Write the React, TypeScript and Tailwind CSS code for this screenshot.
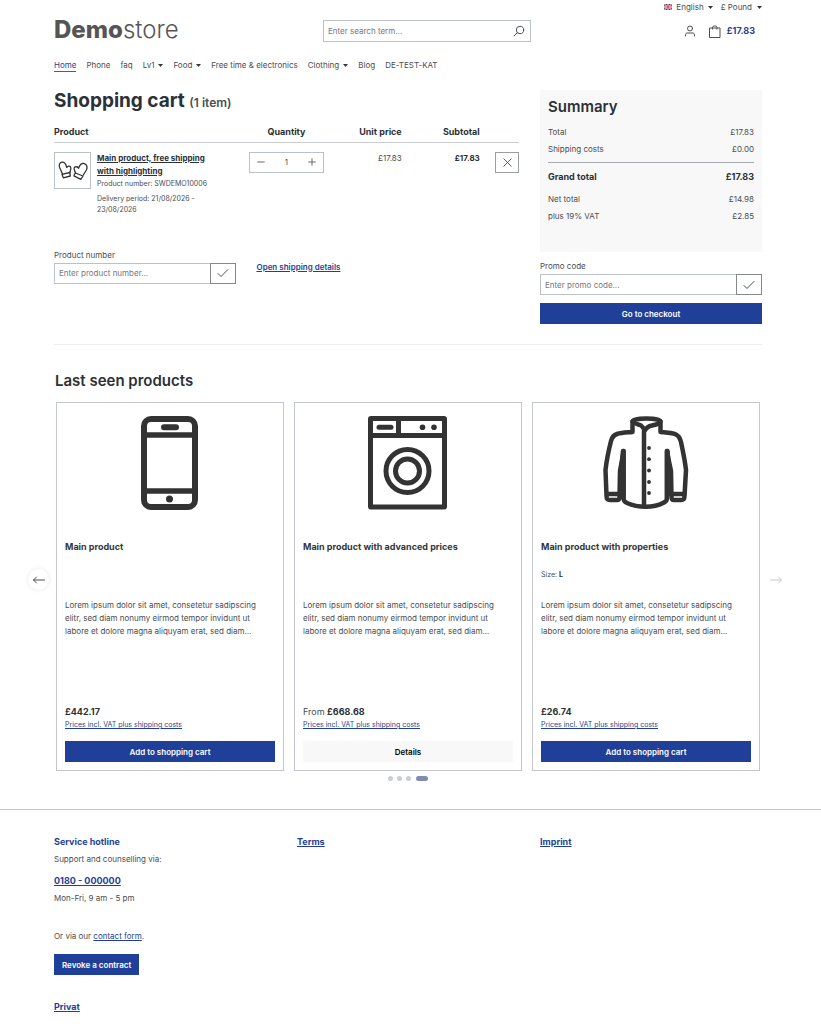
import React, { useState } from 'react';

const NAV_ITEMS = [
  { label: 'Home', active: true },
  { label: 'Phone' },
  { label: 'faq' },
  { label: 'Lv1', dropdown: true },
  { label: 'Food', dropdown: true },
  { label: 'Free time & electronics' },
  { label: 'Clothing', dropdown: true },
  { label: 'Blog' },
  { label: 'DE-TEST-KAT' },
];

const LOREM =
  'Lorem ipsum dolor sit amet, consetetur sadipscing elitr, sed diam nonumy eirmod tempor invidunt ut labore et dolore magna aliquyam erat, sed diam...';

interface Product {
  name: string;
  price: string;
  from?: boolean;
  size?: string;
  details?: boolean;
  Icon: () => React.JSX.Element;
}

const PRODUCTS: Product[] = [
  { name: 'Main product', price: '£442.17', Icon: PhoneIcon },
  { name: 'Main product with advanced prices', price: '£668.68', from: true, details: true, Icon: WasherIcon },
  { name: 'Main product with properties', price: '£26.74', size: 'L', Icon: JacketIcon },
];

function PhoneIcon() {
  return (
    <svg className="h-24 w-24" viewBox="0 0 96 96" fill="none" stroke="#333" strokeWidth="6">
      <rect x="22" y="4" width="51" height="88" rx="7" />
      <path d="M22 20h51M22 76h51" strokeWidth="5.5" />
      <path d="M42 12.3h12" strokeLinecap="round" />
      <circle cx="47.5" cy="84" r="3.5" fill="#333" stroke="none" />
    </svg>
  );
}

function WasherIcon() {
  return (
    <svg className="h-24 w-24" viewBox="0 0 96 96" fill="none" stroke="#333" strokeWidth="5">
      <rect x="10.5" y="3.5" width="74" height="88.5" rx="0.5" strokeLinejoin="round" />
      <path d="M10 20.5h75M38.5 3v17" />
      <path d="M19 12.2h12" strokeLinecap="round" />
      <circle cx="62.5" cy="12.2" r="2.8" fill="#333" stroke="none" />
      <circle cx="74" cy="12.2" r="2.8" fill="#333" stroke="none" />
      <circle cx="47.5" cy="56" r="21.5" />
      <circle cx="47.5" cy="56" r="12" />
    </svg>
  );
}

function JacketIcon() {
  return (
    <svg className="h-24 w-24" viewBox="0 0 96 96" fill="none" stroke="#333" strokeWidth="4.5" strokeLinecap="round" strokeLinejoin="round">
      <path d="M34.500 6.500C35 2.500 62 2.500 62.500 6.500V17C70 17.500 75 18 78 19.500C81 21 82 23 83 27C84.500 34 87 46 88 55L86.500 81C86.500 84.500 85 85 83 85H76C74 85 73.500 84 73.500 82L73 56L68.800 36V84C68.800 86.500 67 87 65 88C56 93 40 93 29 88C27 87 25.700 86.500 25.700 84V36L22 56L21.500 82C21.500 84 21 85 19 85H12C10 85 8.500 84.500 8.500 81L7.500 55C8.500 46 11.500 32 13 26C14 22 16 20 19 19C24 17.500 30 17.500 34.500 17Z" />
      <path d="M34.500 6.500C38 10 41 9 43 10.500C45 12 46 13.500 46.500 16C48 13 51 11 54 10.500C58 9.500 61 9.500 62.500 6.500M46 16V91" />
      <path d="M9.500 79H21M74 79h12M25 36l-1.500 19v24M69.500 36L71 55v24" />
      <g fill="#333" stroke="none">
        <circle cx="51" cy="33" r="1.900" />
        <circle cx="51" cy="44.200" r="1.900" />
        <circle cx="51" cy="55.500" r="1.900" />
        <circle cx="51" cy="67" r="1.900" />
        <circle cx="51" cy="78" r="1.900" />
      </g>
    </svg>
  );
}

function MittensIcon() {
  return (
    <svg className="h-[30px] w-[30px]" viewBox="0 0 30 30" fill="none" stroke="#333" strokeWidth="1.3" strokeLinejoin="round" strokeLinecap="round">
      <path d="M4.500 19L1.600 12.500C0.600 9.500 1.700 7.800 3.800 7.200C6 6.800 7.500 8.500 8.300 11L8.800 12.500C9.800 10.800 11.600 10.600 12.600 12C13.500 13.500 12.300 15.800 11.700 18" />
      <path d="M4 19.300L11.800 17.500L12.300 21L5.300 22.800Z" />
      <path d="M25.300 20L28.400 15C29.700 12 28.800 9.500 26.300 8.600C24 8 22.200 9.300 21.100 12L20.600 13.300C19.700 11.500 17.500 11.200 16.400 12.500C15.400 13.800 16.500 15.800 17.700 18" />
      <path d="M17.300 18L25 21L22.800 24.300L15.900 20.800Z" />
    </svg>
  );
}

function FlagIcon() {
  return (
    <svg className="h-[6px] w-2" viewBox="0 0 16 12">
      <path fill="#31457f" d="M0 0h16v12H0z" />
      <path stroke="#fff" strokeWidth="2.200" d="M0 0l16 12M16 0L0 12" />
      <path stroke="#c8324b" strokeWidth="1.200" d="M0 0l16 12M16 0L0 12" />
      <path stroke="#fff" strokeWidth="4" d="M8 0v12M0 6h16" />
      <path stroke="#c8324b" strokeWidth="2.400" d="M8 0v12M0 6h16" />
    </svg>
  );
}

function Caret() {
  return (
    <svg className="h-[3px] w-[5px]" viewBox="0 0 5 3" fill="#33373c">
      <path d="M0 0h5L2.500 3z" />
    </svg>
  );
}

function StrokeIcon({ d, className }: { d: string; className: string }) {
  return (
    <svg className={className} viewBox="0 0 12 12" fill="none" stroke="currentColor" strokeWidth="1" strokeLinecap="round" strokeLinejoin="round">
      <path d={d} />
    </svg>
  );
}

const CHECK = 'M1 6.500l3 3L11 2.500';
const CROSS = 'M2 2l8 8M10 2l-8 8';
const ARROW_LEFT = 'M11.500 6H0.500M3.500 3l-3 3 3 3';
const ARROW_RIGHT = 'M0.500 6h11M8.500 3l3 3-3 3';

function CodeField({ id, label, placeholder }: { id: string; label: string; placeholder: string }) {
  return (
    <div>
      <label htmlFor={id} className="block leading-3">{label}</label>
      <div className="mt-[2px] flex h-[21px]">
        <input
          id={id}
          placeholder={placeholder}
          className="min-w-0 flex-1 border border-r-0 border-[#bcc1c7] px-1 placeholder:text-[#75797f] outline-none"
        />
        <button aria-label="Submit" className="flex w-[26px] items-center justify-center border border-[#85898e]">
          <StrokeIcon className="h-3 w-3" d={CHECK} />
        </button>
      </div>
    </div>
  );
}

function Header() {
  return (
    <header>
      <div className="flex h-[14px] items-center justify-end gap-2">
        <button className="flex items-center gap-1">
          <FlagIcon />
          English
          <Caret />
        </button>
        <button className="flex items-center gap-[5px]">
          £ Pound
          <Caret />
        </button>
      </div>
      <div className="flex h-[34px] items-center">
        <a href="#" className="-mt-0.5 w-[38%] text-2xl leading-6 text-[#555]">
          <span className="font-extrabold">Demo</span>
          <span className="font-light">store</span>
        </a>
        <div className="flex h-[22px] w-[208px] items-center border border-[#bcc1c7]">
          <input aria-label="Search" placeholder="Enter search term..." className="min-w-0 flex-1 px-1 placeholder:text-[#75797f] outline-none" />
          <button aria-label="Search" className="px-[5px]">
            <svg className="h-3 w-3" viewBox="0 0 12 12" fill="none" stroke="#4a4d52" strokeWidth="1" strokeLinecap="round">
              <circle cx="7" cy="5" r="3.700" />
              <path d="M4.200 7.800L1 11" />
            </svg>
          </button>
        </div>
        <div className="flex flex-1 items-center justify-end pr-[7px]">
          <button aria-label="Your account">
            <svg className="h-3 w-3" viewBox="0 0 12 12" fill="none" stroke="#4a4d52" strokeWidth="1" strokeLinecap="round">
              <circle cx="6" cy="3.500" r="2.500" />
              <path d="M1.500 11V9.500C1.500 8.500 2.300 8 3.200 8H8.800C9.700 8 10.500 8.500 10.500 9.500V11" />
            </svg>
          </button>
          <button className="ml-3 flex items-center gap-[6px] text-[9px] font-bold text-[#1f3f98]">
            <svg className="h-[13px] w-[13px]" viewBox="0 0 13 13" fill="none" stroke="#4a4d52" strokeWidth="1" strokeLinejoin="round">
              <path d="M1.500 3h10.500v9.500H1.500zM4.500 4.500V2.200C4.500 0.500 9 0.500 9 2.200V4.500" />
            </svg>
            £17.83
          </button>
        </div>
      </div>
      <nav className="mt-[10px] flex h-[14px] gap-[10px] whitespace-nowrap">
        {NAV_ITEMS.map((item) => (
          <a
            key={item.label}
            href="#"
            className={item.active ? 'border-b border-[#3c5cae] leading-[14px] text-[#1f3f98]' : 'flex items-center gap-1 leading-[14px]'}
          >
            {item.label}
            {item.dropdown && <Caret />}
          </a>
        ))}
      </nav>
    </header>
  );
}

function CartTable() {
  const [quantity, setQuantity] = useState(1);

  return (
    <table className="mt-2 w-full table-fixed">
      <colgroup>
        <col className="w-[42%]" />
        <col className="w-[16%]" />
        <col className="w-[17%]" />
        <col className="w-[17%]" />
        <col className="w-[8%]" />
      </colgroup>
      <thead>
        <tr className="h-5 border-b border-[#c9ccd0] text-[9px] text-[#2b3136]">
          <th className="text-left font-bold">Product</th>
          <th className="text-center font-bold">Quantity</th>
          <th className="pr-px text-right font-bold">Unit price</th>
          <th className="pr-[2px] text-right font-bold">Subtotal</th>
          <th aria-label="Remove" />
        </tr>
      </thead>
      <tbody>
        <tr className="align-top">
          <td className="pt-[9px]">
            <div className="flex gap-[6px] pr-8">
              <div className="flex h-[37px] w-[37px] shrink-0 items-center justify-center border border-[#bcc1c7]">
                <MittensIcon />
              </div>
              <div className="text-[7px] leading-[11px]">
                <a href="#" className="block text-[8px] font-bold leading-[13px] text-[#2b3136] underline">
                  Main product, free shipping with highlighting
                </a>
                <p>Product number: SWDEMO10006</p>
                <p className="mt-1">Delivery period: 21/08/2026 - 23/08/2026</p>
              </div>
            </div>
          </td>
          <td className="pt-[9px]">
            <div className="flex h-[21px] items-center border border-[#bcc1c7]">
              <button aria-label="Decrease quantity" className="flex w-[22px] justify-center" onClick={() => setQuantity(Math.max(1, quantity - 1))}>
                <StrokeIcon className="h-[10px] w-[10px]" d="M2 6h8" />
              </button>
              <input
                aria-label="Quantity"
                className="min-w-0 flex-1 text-center outline-none"
                value={quantity}
                onChange={(e) => setQuantity(Number(e.target.value) || 1)}
              />
              <button aria-label="Increase quantity" className="flex w-[22px] justify-center" onClick={() => setQuantity(quantity + 1)}>
                <StrokeIcon className="h-[10px] w-[10px]" d="M2 6h8M6 2v8" />
              </button>
            </div>
          </td>
          <td className="pr-px pt-[9px] text-right leading-[13px]">£17.83</td>
          <td className="pr-[2px] pt-[9px] text-right font-bold leading-[13px] text-[#2b3136]">£17.83</td>
          <td className="pt-[9px]">
            <button aria-label="Remove product" className="ml-auto flex h-[21px] w-6 items-center justify-center border border-[#9a9ea3]">
              <StrokeIcon className="h-[11px] w-[11px]" d={CROSS} />
            </button>
          </td>
        </tr>
      </tbody>
    </table>
  );
}

function SummaryRow({ label, value }: { label: string; value: string }) {
  return (
    <div className="flex justify-between leading-[17px]">
      <dt>{label}</dt>
      <dd>{value}</dd>
    </div>
  );
}

function Summary() {
  return (
    <aside>
      <div className="h-[162px] bg-[#f8f8f8] px-2 pt-2">
        <h2 className="text-[15px] font-semibold leading-[18px] text-[#2b3136]">Summary</h2>
        <dl className="mt-2">
          <SummaryRow label="Total" value="£17.83" />
          <SummaryRow label="Shipping costs" value="£0.00" />
          <div className="mb-[6px] mt-1 flex justify-between border-t border-[#a5a9ae] pt-[6px] text-[9px] font-bold leading-4 text-[#2b3136]">
            <dt>Grand total</dt>
            <dd>£17.83</dd>
          </div>
          <SummaryRow label="Net total" value="£14.98" />
          <SummaryRow label="plus 19% VAT" value="£2.85" />
        </dl>
      </div>
      <div className="mt-2">
        <CodeField id="promo" label="Promo code" placeholder="Enter promo code..." />
      </div>
      <button className="mt-2 h-[21px] w-full bg-[#1f3f98] font-semibold text-white">Go to checkout</button>
    </aside>
  );
}

function ProductCard({ product }: { product: Product }) {
  const { name, price, from, size, details, Icon } = product;

  return (
    <article className="flex h-[369px] flex-col border border-[#c4c7cb] p-2">
      <div className="flex justify-center pt-1">
        <Icon />
      </div>
      <h3 className="mt-[29px] text-[9px] font-bold leading-[13px] text-[#33373c]">{name}</h3>
      <div className="mt-[15px] h-[13px] text-[7px] leading-[13px]">
        {size && <>Size: <b className="text-[#2b3136]">{size}</b></>}
      </div>
      <p className="mt-[18px] pr-2 leading-[13px]">{LOREM}</p>
      <p className="mt-auto text-[9px] leading-[14px]">
        {from && 'From '}
        <b className="font-bold text-[#2b3136]">{price}</b>
      </p>
      <a href="#" className="text-[7px] leading-3 text-[#1f3f98] underline">Prices incl. VAT plus shipping costs</a>
      <button
        className={
          details
            ? 'mt-[10px] h-[21px] w-full bg-[#f8f8f8] font-semibold text-black'
            : 'mt-[10px] h-[21px] w-full bg-[#1f3f98] font-semibold text-white'
        }
      >
        {details ? 'Details' : 'Add to shopping cart'}
      </button>
    </article>
  );
}

function LastSeen() {
  return (
    <section className="mt-5 border-t border-[#efefef] px-px pt-[26px]">
      <h2 className="text-[15px] font-semibold leading-5 text-[#2b3136]">Last seen products</h2>
      <div className="relative mt-[11px] px-px">
        <div className="grid grid-cols-3 gap-[10px]">
          {PRODUCTS.map((product) => (
            <ProductCard key={product.name} product={product} />
          ))}
        </div>
        <button aria-label="Previous" className="absolute -left-[27px] top-[167px] flex h-[21px] w-[21px] items-center justify-center rounded-full bg-white shadow-[0_0_4px_rgba(0,0,0,0.1)]">
          <StrokeIcon className="h-3 w-3" d={ARROW_LEFT} />
        </button>
        <button aria-label="Next" disabled className="absolute -right-[25px] top-[167px] flex h-[21px] w-[21px] items-center justify-center text-[#c4c7cb]">
          <StrokeIcon className="h-3 w-3" d={ARROW_RIGHT} />
        </button>
      </div>
      <div className="mt-[5px] flex h-[5px] justify-center gap-1">
        {[1, 2, 3].map((n) => (
          <button key={n} aria-label={`Page ${n}`} className="w-[5px] rounded-full bg-[#cbcdd1]" />
        ))}
        <button aria-label="Page 4" className="ml-px w-3 rounded-full bg-[#7f8cb0]" />
      </div>
    </section>
  );
}

function Footer() {
  return (
    <footer className="mt-7 border-t border-[#c4c7cb] pb-[10px] pl-[54px] pr-[59px] pt-[25px]">
      <div className="grid grid-cols-3 gap-[21px] text-[9px] font-bold leading-[14px] text-[#1f3f98]">
        <div>
          <h2>Service hotline</h2>
          <p className="mt-[3px] text-[8px] font-normal text-[#4a4d52]">Support and counselling via:</p>
          <a href="#" className="mt-2 block underline">0180 - 000000</a>
          <p className="mt-[3px] text-[8px] font-normal text-[#4a4d52]">Mon-Fri, 9 am - 5 pm</p>
          <p className="mt-6 text-[8px] font-normal text-[#4a4d52]">
            Or via our <a href="#" className="text-[#1f3f98] underline">contact form</a>.
          </p>
          <button className="mt-[11px] h-[21px] bg-[#1f3f98] px-2 text-[8px] font-semibold text-white">Revoke a contract</button>
        </div>
        <div><a href="#" className="underline">Terms</a></div>
        <div><a href="#" className="underline">Imprint</a></div>
      </div>
      <a href="#" className="mt-[25px] block text-[9px] font-bold leading-[14px] text-[#1f3f98] underline">Privat</a>
    </footer>
  );
}

export default function App() {
  return (
    <div className="bg-white font-['Inter',sans-serif] text-[8px] text-[#4a4d52]">
      <div className="pl-[54px] pr-[59px]">
        <Header />
        <main className="mt-[18px]">
          <div className="grid grid-cols-3 gap-[21px]">
            <div className="col-span-2">
              <h1 className="text-[19px] font-bold leading-[22px] text-[#2b3136]">
                Shopping cart <small className="text-[12px] font-semibold text-[#4a4d52]">(1 item)</small>
              </h1>
              <CartTable />
              <div className="mt-[34px] grid grid-cols-12 gap-[21px]">
                <div className="col-span-5">
                  <CodeField id="product-number" label="Product number" placeholder="Enter product number..." />
                </div>
                <a href="#" className="col-span-7 mt-3 font-semibold leading-3 text-[#1f3f98] underline">Open shipping details</a>
              </div>
            </div>
            <Summary />
          </div>
          <LastSeen />
        </main>
      </div>
      <Footer />
    </div>
  );
}
